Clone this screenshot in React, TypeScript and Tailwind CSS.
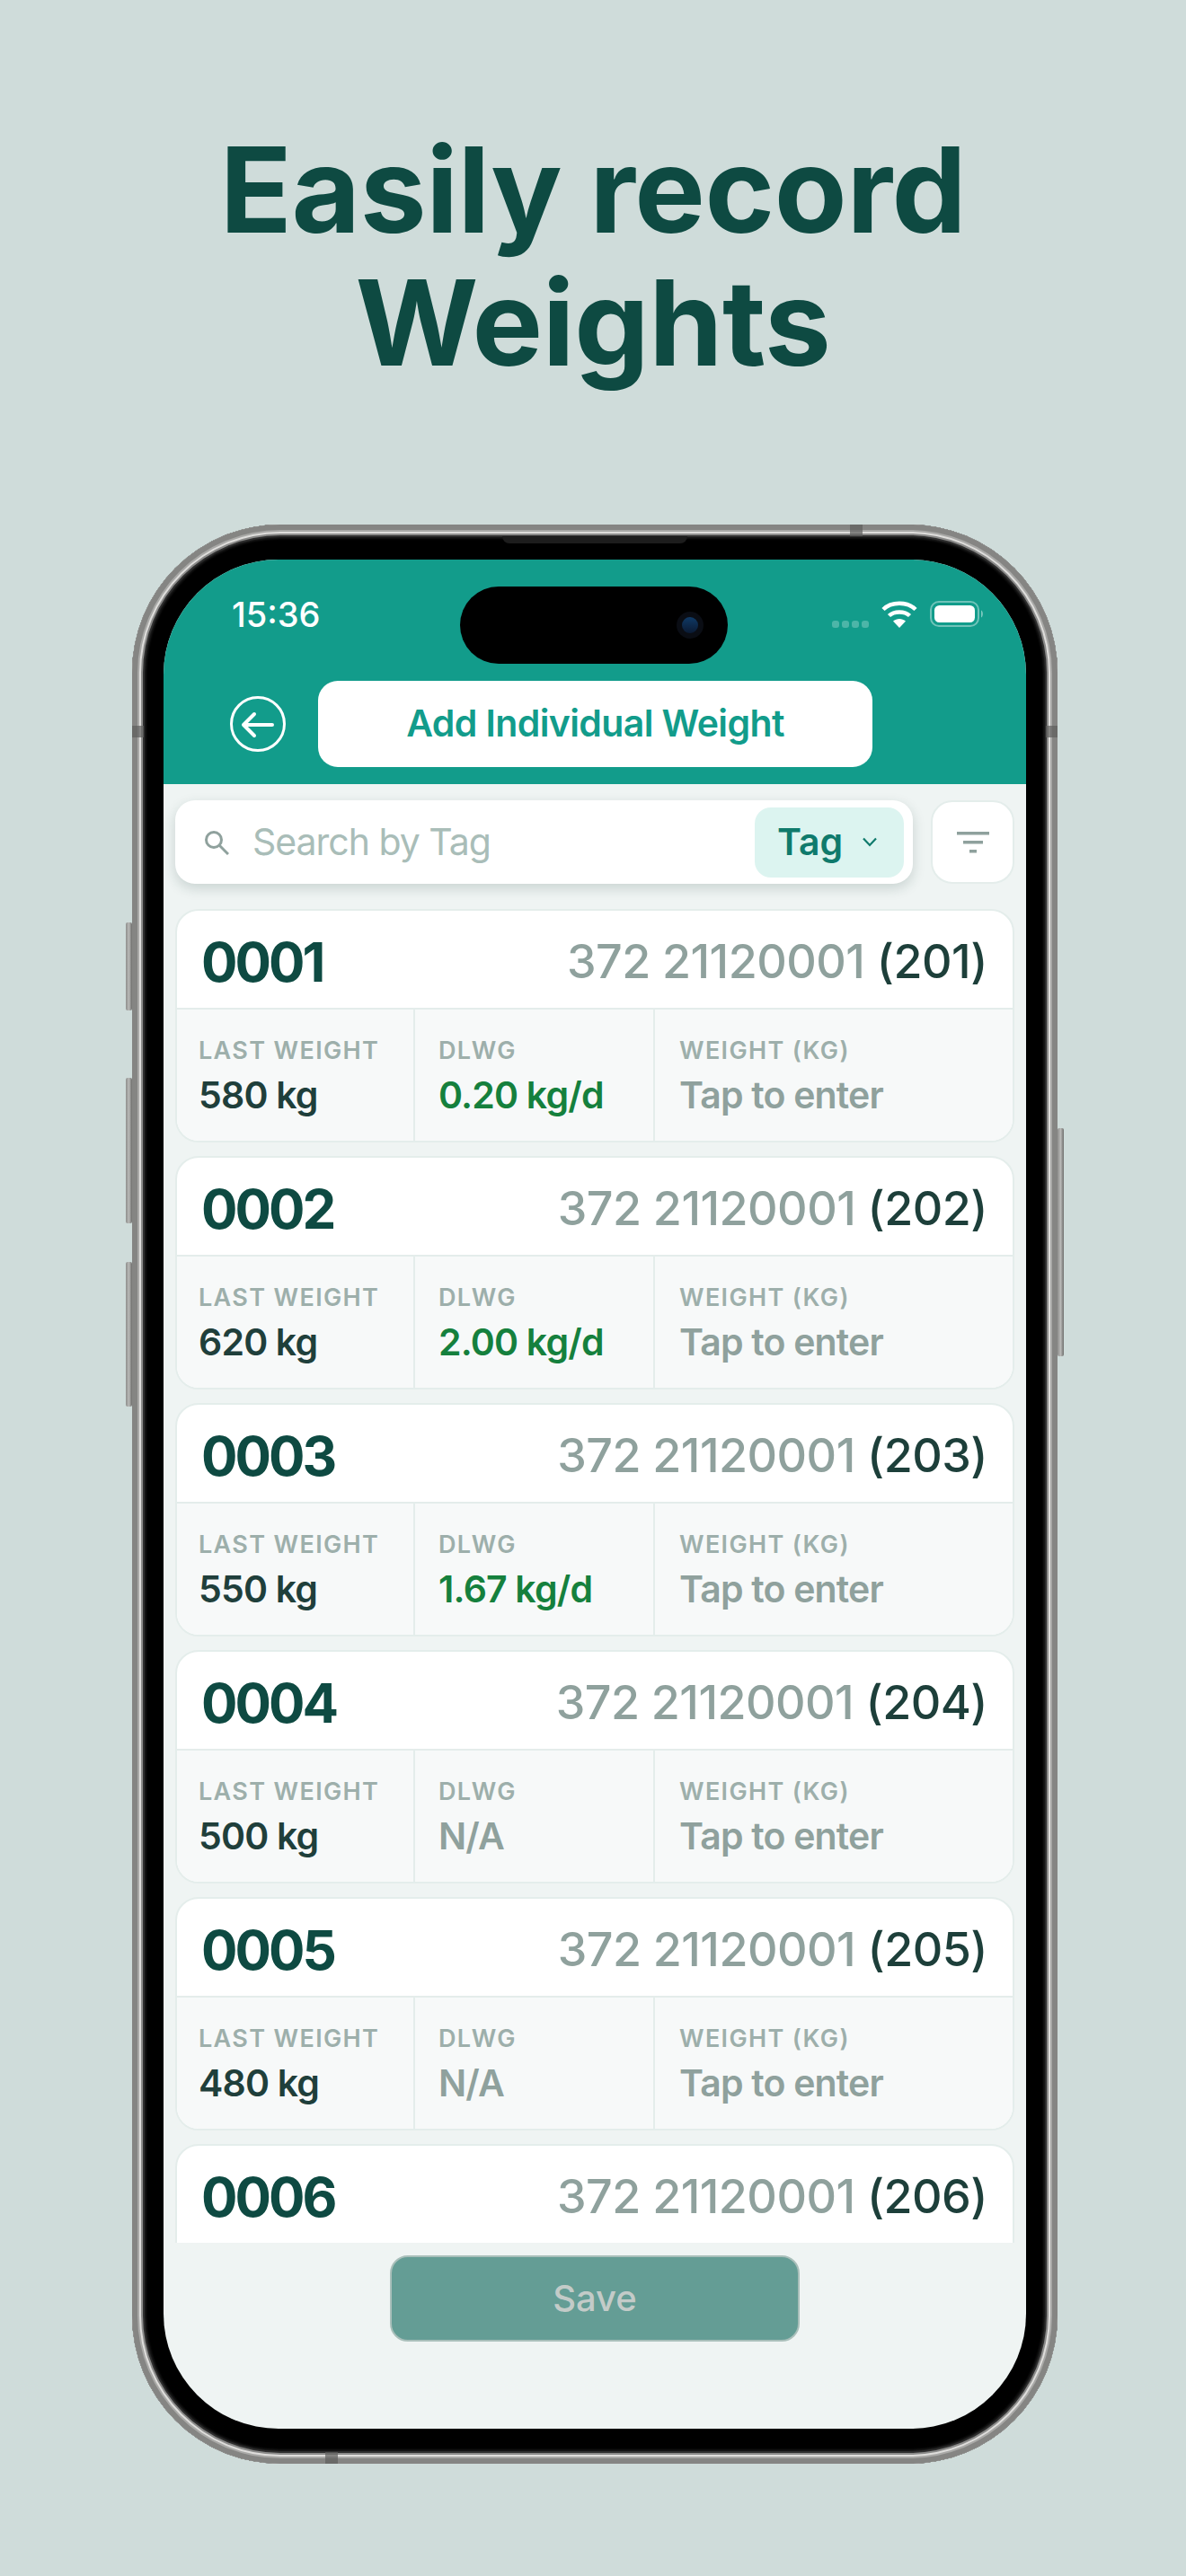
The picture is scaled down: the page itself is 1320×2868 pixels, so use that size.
import React from "react";

type Row = { id: string; code: string; last?: string; dlwg?: string; green?: boolean };

const rows: Row[] = [
  { id: "0001", code: "(201)", last: "580 kg", dlwg: "0.20 kg/d", green: true },
  { id: "0002", code: "(202)", last: "620 kg", dlwg: "2.00 kg/d", green: true },
  { id: "0003", code: "(203)", last: "550 kg", dlwg: "1.67 kg/d", green: true },
  { id: "0004", code: "(204)", last: "500 kg", dlwg: "N/A" },
  { id: "0005", code: "(205)", last: "480 kg", dlwg: "N/A" },
  { id: "0006", code: "(206)" },
];

function Cell({ label, value, valueClass, className }: { label: string; value: string; valueClass: string; className: string }) {
  return (
    <div className={className}>
      <div className="text-[27px] leading-[32px] font-semibold tracking-[0.05em] text-[#9DAFAB] whitespace-nowrap">{label}</div>
      <div className={"mt-[8px] text-[41px] leading-[50px] font-semibold tracking-[-0.02em] whitespace-nowrap " + valueClass}>{value}</div>
    </div>
  );
}

function Card({ row }: { row: Row }) {
  return (
    <div className="h-[260px] shrink-0 rounded-[26px] border-2 border-[#E4EDEB] bg-white overflow-hidden flex flex-col">
      <div className="h-[108px] shrink-0 pt-[5px] pl-[27px] pr-[28px] flex items-center justify-between">
        <span className="text-[60px] leading-none font-bold tracking-[-0.05em] text-[#0E4A42]">{row.id}</span>
        <span className="text-[52px] leading-none font-medium tracking-[-0.01em] text-[#8FA19D] whitespace-nowrap">
          372 21120001 <span className="text-[#1D3F3A]">{row.code}</span>
        </span>
      </div>
      {row.last && (
        <div className="flex-1 flex border-t-2 border-[#E4EDEB] bg-[#F7F9F9]">
          <Cell className="w-[265px] pl-[24px] pt-[30px] border-r-2 border-[#E4EDEB]" label="LAST WEIGHT" value={row.last} valueClass="text-[#1F3F3B]" />
          <Cell className="w-[267px] pl-[26px] pt-[30px] border-r-2 border-[#E4EDEB]" label="DLWG" value={row.dlwg ?? ""} valueClass={row.green ? "text-[#15803D]" : "text-[#8FA19D]"} />
          <Cell className="flex-1 pl-[27px] pt-[30px]" label="WEIGHT (KG)" value="Tap to enter" valueClass="text-[#8FA19D]" />
        </div>
      )}
    </div>
  );
}

function StatusIcons() {
  return (
    <svg width="170" height="32" viewBox="0 0 170 32" fill="none">
      <g fill="#ffffff" fillOpacity="0.25">
        <rect x="0" y="23" width="8" height="8" rx="3" />
        <rect x="11" y="23" width="8" height="8" rx="3" />
        <rect x="22" y="23" width="8" height="8" rx="3" />
        <rect x="33" y="23" width="8" height="8" rx="3" />
      </g>
      <g stroke="#ffffff" strokeWidth="4.5" fill="none">
        <path d="M57 10.5 C66 1.5 84 1.5 93 10.5" />
        <path d="M63.5 17.5 C69 12 81 12 86.5 17.5" />
      </g>
      <path d="M75 31 L68 23.5 C72 20 78 20 82 23.5 Z" fill="#ffffff" />
      <rect x="110" y="2" width="53" height="27" rx="9" stroke="#ffffff" strokeOpacity="0.4" strokeWidth="2" />
      <rect x="114" y="6" width="45" height="19" rx="5.5" fill="#ffffff" />
      <path d="M166 11.5 C168.5 12.5 168.5 18.5 166 19.5 Z" fill="#ffffff" fillOpacity="0.45" />
    </svg>
  );
}

function SideButton({ className }: { className: string }) {
  return (
    <div className={"absolute w-[7px] rounded-[2px] bg-gradient-to-r from-[#8f8f8d] via-[#b8b8b6] to-[#6f6f6d] " + className} />
  );
}

export default function App() {
  return (
    <div className="w-[1320px] h-[2868px] bg-[#CFDCDA] overflow-hidden flex flex-col items-center font-['Inter',sans-serif]">
      <h1 className="pt-[137px] text-center text-[132px] leading-[148px] font-bold tracking-[-0.003em] text-[#0E4A42]">
        Easily record
        <br />
        Weights
      </h1>

      <div className="relative mt-[151px] ml-[4px] w-[1030px] h-[2159px] shrink-0">
        <SideButton className="left-[-7px] top-[443px] h-[98px]" />
        <SideButton className="left-[-7px] top-[616px] h-[162px]" />
        <SideButton className="left-[-7px] top-[821px] h-[161px]" />
        <SideButton className="right-[-7px] top-[672px] h-[254px]" />

        <div className="w-full h-full px-[35px] py-[39px] rounded-[165px] bg-black shadow-[inset_0_0_0_6px_#858583,inset_0_0_0_8px_#a9a9a7,inset_0_0_0_10px_#dedddb,inset_0_0_0_12px_#8b8b8a,inset_0_0_1px_14px_#303030,inset_0_0_2px_16px_#151515]">
          <div className="relative w-full h-full rounded-[128px] overflow-hidden bg-[#EFF4F3] flex flex-col">
            <div className="h-[250px] shrink-0 bg-[#129C8B] flex flex-col">
              <div className="h-[135px] shrink-0 pt-[41px] pl-[76px] pr-[46px] flex items-start justify-between">
                <span className="text-[38px] leading-[40px] font-medium text-white">15:36</span>
                <div className="mt-[4px]">
                  <StatusIcons />
                </div>
              </div>
              <div className="flex items-center pl-[74px] gap-[36px]">
                <svg width="62" height="62" viewBox="0 0 62 62" fill="none" stroke="#ffffff">
                  <circle cx="31" cy="31" r="29.5" strokeWidth="3" />
                  <path d="M47 32 H15 M27 20 L15 32 L27 44" strokeWidth="4" strokeLinecap="round" strokeLinejoin="round" />
                </svg>
                <div className="w-[617px] h-[96px] rounded-[22px] bg-white flex items-center justify-center text-[41px] font-semibold tracking-[-0.015em] text-[#129C8B]">
                  Add Individual Weight
                </div>
              </div>
            </div>

            <div className="flex-1 min-h-0 flex flex-col pt-[18px] pl-[13px] pr-[13px]">
              <div className="flex gap-[20px] h-[93px] shrink-0">
                <div className="flex-1 rounded-[22px] bg-white shadow-[0_5px_14px_rgba(30,60,55,0.18)] flex items-center pl-[32px] pr-[10px]">
                  <svg width="28" height="28" viewBox="0 0 28 28" fill="none" stroke="#8FA19D" strokeWidth="3">
                    <circle cx="11" cy="11" r="8.5" />
                    <path d="M17.5 17.5 L27 27" />
                  </svg>
                  <span className="ml-[26px] text-[41px] tracking-[-0.025em] text-[#A9BDB8] flex-1">Search by Tag</span>
                  <div className="w-[166px] h-[78px] rounded-[18px] bg-[#DCF4F0] flex items-center pl-[25px]">
                    <span className="text-[41px] font-semibold text-[#0F7A6C]">Tag</span>
                    <svg className="ml-[22px]" width="16" height="11" viewBox="0 0 16 11" fill="none" stroke="#0F7A6C" strokeWidth="2.2">
                      <path d="M1 1.5 L8 9 L15 1.5" />
                    </svg>
                  </div>
                </div>
                <div className="w-[93px] rounded-[24px] bg-white border-2 border-[#E4EDEB] flex items-center justify-center">
                  <svg width="36" height="24" viewBox="0 0 36 24" fill="#8FA19D">
                    <rect x="0" y="0" width="36" height="3.5" />
                    <rect x="7" y="10" width="22" height="3.5" />
                    <rect x="14" y="20" width="8" height="3.5" />
                  </svg>
                </div>
              </div>

              <div className="flex-1 min-h-0 overflow-hidden mt-[28px] flex flex-col gap-[15px]">
                {rows.map((r) => (
                  <Card key={r.id} row={r} />
                ))}
              </div>
            </div>

            <div className="h-[207px] shrink-0 pt-[14px] flex justify-center">
              <div className="w-[456px] h-[96px] rounded-[20px] bg-[#649D95] border-2 border-[#A9BFBA] flex items-center justify-center text-[40px] font-medium text-[#C3CBC8]">
                Save
              </div>
            </div>

            <div className="absolute left-[330px] top-[30px] w-[298px] h-[86px] rounded-full bg-black flex items-center justify-end pr-[27px]">
              <div className="w-[30px] h-[30px] rounded-full bg-[#0a0d14] flex items-center justify-center">
                <div className="w-[18px] h-[18px] rounded-full bg-gradient-to-b from-[#0f3a66] to-[#0a1a33]" />
              </div>
            </div>
          </div>
        </div>

        <div className="absolute left-0 top-[224px] w-[13px] h-[13px] bg-[#5e5e5c]/70" />
        <div className="absolute right-0 top-[224px] w-[13px] h-[13px] bg-[#5e5e5c]/70" />
        <div className="absolute left-[799px] top-0 w-[14px] h-[13px] bg-[#5e5e5c]/70" />
        <div className="absolute left-[215px] bottom-0 w-[14px] h-[13px] bg-[#5e5e5c]/70" />
        <div className="absolute left-[412px] top-[13px] w-[206px] h-[8px] rounded-b-[8px] bg-[#1d1d1d]" />
      </div>
    </div>
  );
}
